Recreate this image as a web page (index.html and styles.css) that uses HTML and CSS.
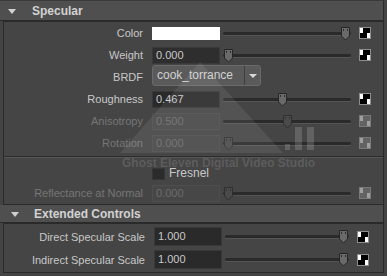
FILE: index.html
```html
<!DOCTYPE html>
<html lang="en">
<head>
    <meta charset="UTF-8">
    <meta name="viewport" content="width=device-width, initial-scale=1.0">
    <title>Specular Attributes</title>
    <link rel="stylesheet" href="styles.css">
</head>
<body>
    <!-- shared slider thumb and map button shapes -->
    <svg class="defs" width="0" height="0">
        <defs>
            <symbol id="thumb" viewBox="0 0 11 15">
                <path d="M1.5 1.5 H9.5 V10 L5.5 14 L1.5 10 Z" class="shield" />
                <rect x="3" y="3" width="1" height="2" class="mark" />
                <rect x="7" y="3" width="1" height="2" class="mark" />
            </symbol>
            <symbol id="map" viewBox="0 0 12 12">
                <rect x="0.5" y="0.5" width="11" height="11" class="light" />
                <rect x="4" y="1" width="7" height="5" class="dark" />
                <rect x="1" y="6" width="7" height="5" class="dark" />
            </symbol>
        </defs>
    </svg>

    <div class="editor">
        <!-- Specular -->
        <div class="frame-header"><span class="arrow"></span>Specular</div>
        <div class="frame">
            <div class="row">
                <span class="label">Color</span>
                <span class="swatch"></span>
                <div class="slider"><span class="track"></span><svg class="thumb" style="left: 117px"><use href="#thumb"/></svg></div>
                <svg class="map"><use href="#map"/></svg>
            </div>
            <div class="row">
                <span class="label">Weight</span>
                <span class="field">0.000</span>
                <div class="slider"><span class="track"></span><svg class="thumb" style="left: 0px"><use href="#thumb"/></svg></div>
                <svg class="map"><use href="#map"/></svg>
            </div>
            <div class="row">
                <span class="label">BRDF</span>
                <div class="dropdown"><span class="value">cook_torrance</span><span class="drop-btn"><span class="caret"></span></span></div>
            </div>
            <div class="row">
                <span class="label">Roughness</span>
                <span class="field dark">0.467</span>
                <div class="slider"><span class="track"></span><svg class="thumb" style="left: 54px"><use href="#thumb"/></svg></div>
                <svg class="map"><use href="#map"/></svg>
            </div>
            <div class="row off">
                <span class="label">Anisotropy</span>
                <span class="field">0.500</span>
                <div class="slider"><span class="track"></span><svg class="thumb" style="left: 59px"><use href="#thumb"/></svg></div>
                <svg class="map"><use href="#map"/></svg>
            </div>
            <div class="row off">
                <span class="label">Rotation</span>
                <span class="field">0.000</span>
                <div class="slider"><span class="track"></span><svg class="thumb" style="left: 0px"><use href="#thumb"/></svg></div>
                <svg class="map"><use href="#map"/></svg>
            </div>
            <div class="divider"></div>
            <div class="row short">
                <label class="check"><span class="box"></span>Fresnel</label>
            </div>
            <div class="row short off">
                <span class="label">Reflectance at Normal</span>
                <span class="field">0.000</span>
                <div class="slider"><span class="track"></span><svg class="thumb" style="left: 0px"><use href="#thumb"/></svg></div>
                <svg class="map"><use href="#map"/></svg>
            </div>
        </div>

        <!-- Extended Controls -->
        <div class="frame-header sub"><span class="arrow"></span>Extended Controls</div>
        <div class="frame sub">
            <div class="row">
                <span class="label">Direct Specular Scale</span>
                <span class="field dark">1.000</span>
                <div class="slider"><span class="track"></span><svg class="thumb" style="left: 113px"><use href="#thumb"/></svg></div>
                <svg class="map"><use href="#map"/></svg>
            </div>
            <div class="row">
                <span class="label">Indirect Specular Scale</span>
                <span class="field dark">1.000</span>
                <div class="slider"><span class="track"></span><svg class="thumb" style="left: 113px"><use href="#thumb"/></svg></div>
                <svg class="map"><use href="#map"/></svg>
            </div>
        </div>

        <!-- watermark over the panel -->
        <div class="watermark">
            <svg width="387" height="276">
                <polygon points="200,62 120,153 283,153" class="logo" />
                <rect x="285" y="144" width="5" height="6" class="bars" />
                <rect x="295" y="127" width="7" height="23" class="bars" />
                <rect x="307" y="127" width="7" height="23" class="bars" />
            </svg>
            <span class="wm-text">Ghost Eleven Digital Video Studio</span>
        </div>
    </div>
</body>
</html>
```

FILE: styles.css
```css
/* General */
body {
    margin: 0;
    background-color: #444444;
    font-family: "Liberation Sans", Arial, sans-serif;
    font-size: 11px;
    color: #c8c8c8;
}
.defs {
    position: absolute;
}
.editor {
    position: relative;
    width: 387px;
    height: 276px;
    overflow: hidden;
}

/* Section headers */
.frame-header {
    width: 383px;
    height: 19px;
    background-color: #4f4f4f;
    border-top: 1px solid #3a3a3a;
    border-bottom: 1px solid #2a2a2a;
    border-right: 1px solid #2a2a2a;
    display: flex;
    align-items: center;
    font-size: 12px;
    font-weight: bold;
    color: #d2d2d2;
}
.frame-header.sub {
    height: 17px;
    border-top: none;
}
.arrow {
    width: 0;
    height: 0;
    border-left: 4px solid transparent;
    border-right: 4px solid transparent;
    border-top: 5px solid #d0d0d0;
    margin: 1px 16px 0 8px;
}
.sub .arrow {
    margin-left: 11px;
    margin-right: 15px;
}

/* Frames */
.frame {
    margin-left: 3px;
    width: 379px;
    border: 1px solid #2a2a2a;
    padding-bottom: 1px;
    background-color: #454545;
}
.frame.sub {
    padding-top: 1px;
}
.row {
    display: grid;
    grid-template-columns: 139px 77px 139px 12px;
    height: 22px;
    align-items: center;
    --shield: #6a6a6a;
    --shield-line: #262626;
    --mark: #2e2e2e;
    --light: #ffffff;
    --light-line: #8e8e8e;
    --dark: #000000;
}
.row.short {
    height: 20px;
}
.frame.sub .row {
    grid-template-columns: 141px 77px 135px 12px;
    height: 23px;
}
.row.off {
    --shield: #4a4a4a;
    --shield-line: #2f2f2f;
    --mark: #333333;
    --light: #a0a0a0;
    --light-line: #7a7a7a;
    --dark: #636363;
}
.label {
    text-align: right;
    white-space: nowrap;
}
.row.off .label {
    color: #767676;
}

/* Inputs */
.field {
    justify-self: end;
    width: 68px;
    height: 17px;
    box-sizing: border-box;
    padding-left: 3px;
    line-height: 15px;
    background-color: #2e2e2e;
    border: 1px solid #393939;
}
.field.dark {
    background-color: #2a2a2a;
}
.frame.sub .field {
    height: 19px;
    line-height: 17px;
}
.row.off .field {
    background-color: #474747;
    border-color: #4e4e4e;
    color: #6c6c6c;
}
.swatch {
    justify-self: end;
    width: 68px;
    height: 13px;
    background-color: #ffffff;
}
.dropdown {
    grid-column: 2 / 4;
    justify-self: start;
    margin-left: 9px;
    margin-top: -3px;
    width: 109px;
    height: 21px;
    box-sizing: border-box;
    display: flex;
    background-color: #5a5a5a;
    border: 1px solid #6a6a6a;
    border-radius: 3px;
}
.dropdown .value {
    flex: 1;
    padding-left: 4px;
    line-height: 19px;
    font-size: 12px;
    color: #d0d0d0;
}
.drop-btn {
    width: 15px;
    border-left: 1px solid #3e3e3e;
    display: flex;
    justify-content: center;
    align-items: center;
}
.caret {
    width: 0;
    height: 0;
    border-left: 4px solid transparent;
    border-right: 4px solid transparent;
    border-top: 4px solid #d8d8d8;
}
.check {
    grid-column: 2 / 4;
    justify-self: start;
    margin-left: 9px;
    margin-top: 1px;
    display: flex;
    align-items: center;
    gap: 4px;
    font-size: 12px;
    line-height: 13px;
}
.box {
    width: 13px;
    height: 12px;
    box-sizing: border-box;
    background-color: #2b2b2b;
    border: 1px solid #363636;
}
.divider {
    margin: 2px 0 5px;
    border-top: 1px solid #2d2d2d;
    border-bottom: 1px solid #555555;
}

/* Sliders */
.slider {
    position: relative;
    height: 15px;
}
.track {
    position: absolute;
    left: 3px;
    right: 8px;
    top: 6px;
    height: 3px;
    background-color: #2a2a2a;
    border-radius: 2px;
    box-shadow: 0 1px 0 #555555;
}
.thumb {
    position: absolute;
    top: 0;
    margin-left: 3px;
    width: 11px;
    height: 15px;
}
.shield {
    fill: var(--shield);
    stroke: var(--shield-line);
}
.mark {
    fill: var(--mark);
}
.map {
    width: 12px;
    height: 12px;
}
.light {
    fill: var(--light);
    stroke: var(--light-line);
}
.dark {
    fill: var(--dark);
}

/* Watermark */
.watermark {
    position: absolute;
    left: 0;
    top: 0;
    pointer-events: none;
}
.watermark svg {
    display: block;
}
.logo {
    fill: rgba(255, 255, 255, 0.08);
}
.bars {
    fill: rgba(255, 255, 255, 0.16);
}
.wm-text {
    position: absolute;
    left: 122px;
    top: 158px;
    font-size: 12px;
    font-weight: bold;
    line-height: 10px;
    white-space: nowrap;
    color: rgba(255, 255, 255, 0.14);
}
```
